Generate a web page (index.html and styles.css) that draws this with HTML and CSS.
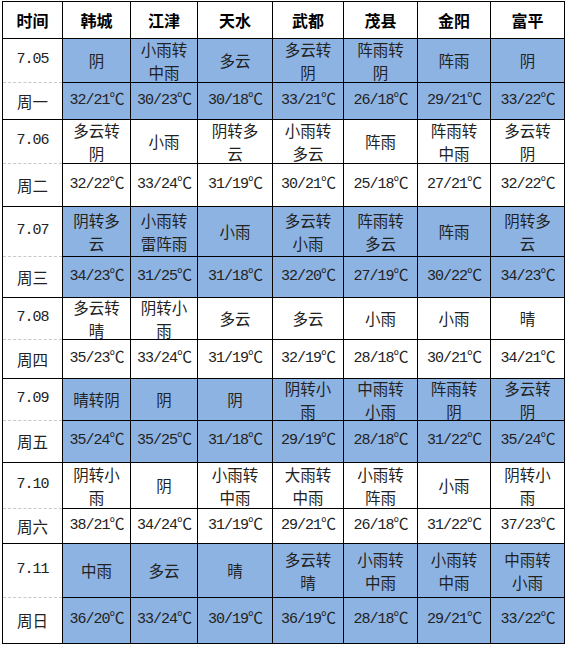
FILE: index.html
```html
<!DOCTYPE html>
<html lang="zh-CN">
<head>
<meta charset="utf-8">
<title>天气预报</title>
<link rel="stylesheet" href="styles.css">
</head>
<body>
<table class="wx">
  <colgroup>
    <col class="c-time"><col class="c1"><col class="c2"><col class="c3"><col class="c4"><col class="c5"><col class="c6"><col class="c7">
  </colgroup>
  <thead>
    <tr class="r-head">
      <th>时间</th><th>韩城</th><th>江津</th><th>天水</th><th>武都</th><th>茂县</th><th>金阳</th><th>富平</th>
    </tr>
  </thead>
  <tbody>
    <tr class="h44 blue">
      <td class="date num">7.05</td><td>阴</td><td><span class="two">小雨转<br>中雨</span></td><td>多云</td><td><span class="two">多云转<br>阴</span></td><td><span class="two">阵雨转<br>阴</span></td><td>阵雨</td><td>阴</td>
    </tr>
    <tr class="h37 blue">
      <td class="week">周一</td><td class="num">32/21℃</td><td class="num">30/23℃</td><td class="num">30/18℃</td><td class="num">33/21℃</td><td class="num">26/18℃</td><td class="num">29/21℃</td><td class="num">33/22℃</td>
    </tr>
    <tr class="h44">
      <td class="date num">7.06</td><td><span class="two">多云转<br>阴</span></td><td>小雨</td><td><span class="two">阴转多<br>云</span></td><td><span class="two">小雨转<br>多云</span></td><td>阵雨</td><td><span class="two">阵雨转<br>中雨</span></td><td><span class="two">多云转<br>阴</span></td>
    </tr>
    <tr class="h43">
      <td class="week">周二</td><td class="num">32/22℃</td><td class="num">33/24℃</td><td class="num">31/19℃</td><td class="num">30/21℃</td><td class="num">25/18℃</td><td class="num">27/21℃</td><td class="num">32/22℃</td>
    </tr>
    <tr class="h50 blue">
      <td class="date num">7.07</td><td><span class="two">阴转多<br>云</span></td><td><span class="two">小雨转<br>雷阵雨</span></td><td>小雨</td><td><span class="two">多云转<br>小雨</span></td><td><span class="two">阵雨转<br>多云</span></td><td>阵雨</td><td><span class="two">阴转多<br>云</span></td>
    </tr>
    <tr class="h41 blue">
      <td class="week">周三</td><td class="num">34/23℃</td><td class="num">31/25℃</td><td class="num">31/18℃</td><td class="num">32/20℃</td><td class="num">27/19℃</td><td class="num">30/22℃</td><td class="num">34/23℃</td>
    </tr>
    <tr class="h42">
      <td class="date num">7.08</td><td><span class="two">多云转<br>晴</span></td><td><span class="two">阴转小<br>雨</span></td><td>多云</td><td>多云</td><td>小雨</td><td>小雨</td><td>晴</td>
    </tr>
    <tr class="h39">
      <td class="week">周四</td><td class="num">35/23℃</td><td class="num">33/24℃</td><td class="num">31/19℃</td><td class="num">32/19℃</td><td class="num">28/18℃</td><td class="num">30/21℃</td><td class="num">34/21℃</td>
    </tr>
    <tr class="h42 blue">
      <td class="date num">7.09</td><td>晴转阴</td><td>阴</td><td>阴</td><td><span class="two">阴转小<br>雨</span></td><td><span class="two">中雨转<br>小雨</span></td><td><span class="two">阵雨转<br>阴</span></td><td><span class="two">多云转<br>阴</span></td>
    </tr>
    <tr class="h42 blue">
      <td class="week">周五</td><td class="num">35/24℃</td><td class="num">35/25℃</td><td class="num">31/18℃</td><td class="num">29/19℃</td><td class="num">28/18℃</td><td class="num">31/22℃</td><td class="num">35/24℃</td>
    </tr>
    <tr class="h46">
      <td class="date num">7.10</td><td><span class="two">阴转小<br>雨</span></td><td>阴</td><td><span class="two">小雨转<br>中雨</span></td><td><span class="two">大雨转<br>中雨</span></td><td><span class="two">小雨转<br>阵雨</span></td><td>小雨</td><td><span class="two">阴转小<br>雨</span></td>
    </tr>
    <tr class="h35">
      <td class="week">周六</td><td class="num">38/21℃</td><td class="num">34/24℃</td><td class="num">31/19℃</td><td class="num">29/21℃</td><td class="num">26/18℃</td><td class="num">31/22℃</td><td class="num">37/23℃</td>
    </tr>
    <tr class="h54 blue">
      <td class="date num">7.11</td><td>中雨</td><td>多云</td><td>晴</td><td><span class="two">多云转<br>晴</span></td><td><span class="two">小雨转<br>中雨</span></td><td><span class="two">小雨转<br>中雨</span></td><td><span class="two">中雨转<br>小雨</span></td>
    </tr>
    <tr class="h46 blue">
      <td class="week">周日</td><td class="num">36/20℃</td><td class="num">33/24℃</td><td class="num">30/19℃</td><td class="num">36/19℃</td><td class="num">28/18℃</td><td class="num">29/21℃</td><td class="num">33/22℃</td>
    </tr>
  </tbody>
</table>
</body>
</html>
```
FILE: styles.css
```css
html, body {
  margin: 0;
  padding: 0;
  background: #ffffff;
}

.wx {
  margin: 1px 0 0 2px;
  border-collapse: collapse;
  table-layout: fixed;
  width: 562px;
  font-family: "Noto Sans CJK SC", sans-serif;
  font-size: 15.5px;
  color: #222222;
}

.c-time { width: 60px; }
.c1 { width: 68px; }
.c2 { width: 67px; }
.c3 { width: 75px; }
.c4 { width: 71px; }
.c5 { width: 74px; }
.c6 { width: 73px; }
.c7 { width: 74px; }

.wx th,
.wx td {
  border: 1px solid #000000;
  padding: 0;
  text-align: center;
  vertical-align: middle;
  line-height: 22.5px;
  overflow: hidden;
  white-space: nowrap;
}

.wx th {
  font-weight: 700;
  font-size: 16px;
  color: #000000;
}

.two {
  display: block;
  margin: -2px 0;
}

.r-head { height: 37px; }
.h35 { height: 35px; }
.h37 { height: 37px; }
.h39 { height: 39px; }
.h41 { height: 41px; }
.h42 { height: 42px; }
.h43 { height: 43px; }
.h44 { height: 44px; }
.h46 { height: 46px; }
.h50 { height: 50px; }
.h54 { height: 54px; }

.blue td {
  background: #8db3e2;
}

.wx .date,
.wx .week {
  background: #ffffff;
}

.wx .date {
  border-bottom: 1px dashed #c8c8c8;
}

.wx .week {
  border-top: none;
}

.num {
  font-family: "Liberation Mono", "Noto Sans CJK SC", monospace;
  font-size: 15px;
  letter-spacing: -1px;
}
```
